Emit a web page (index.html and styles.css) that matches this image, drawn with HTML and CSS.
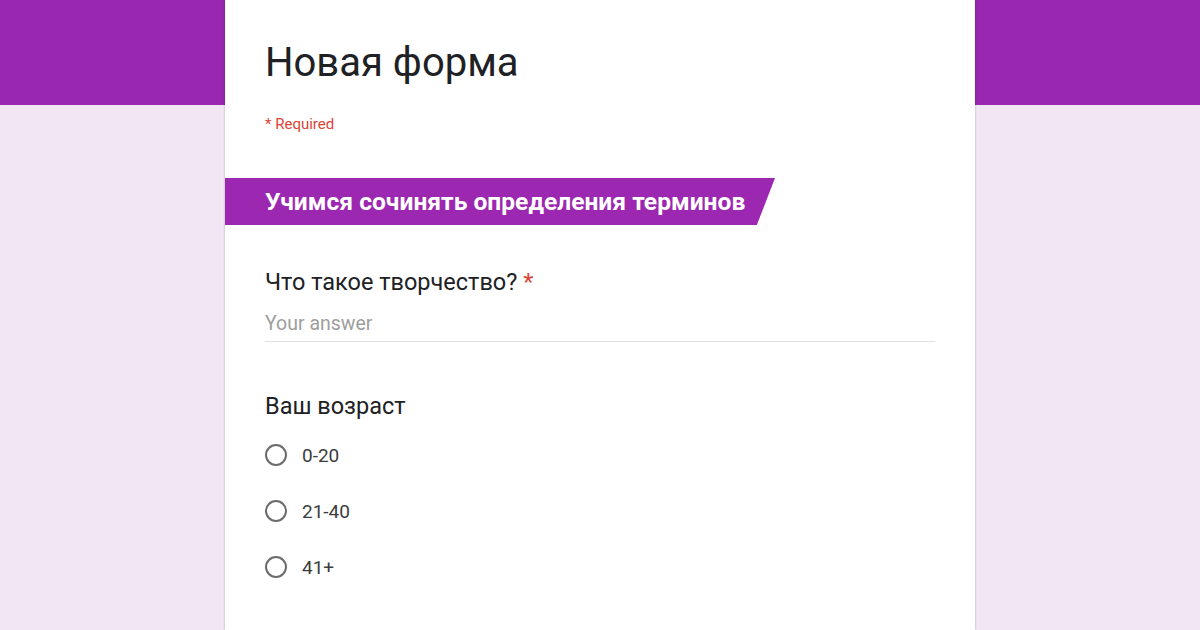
FILE: index.html
```html
<!DOCTYPE html>
<html lang="ru">
<head>
<meta charset="UTF-8">
<meta name="viewport" content="width=device-width, initial-scale=1.0">
<title>Новая форма</title>
<link rel="stylesheet" href="styles.css">
</head>
<body>
<div class="header-band"></div>
<div class="card">
  <div class="form-head">
    <h1>Новая форма</h1>
    <div class="required-note"><span class="star">*</span> Required</div>
  </div>

  <div class="section-title">Учимся сочинять определения терминов</div>

  <div class="question">
    <div class="q-title">Что такое творчество? <span class="star">*</span></div>
    <div class="answer">Your answer</div>
  </div>

  <div class="question">
    <div class="q-title">Ваш возраст</div>
    <div class="options">
      <label class="option"><span class="radio"></span>0-20</label>
      <label class="option"><span class="radio"></span>21-40</label>
      <label class="option"><span class="radio"></span>41+</label>
    </div>
  </div>
</div>
</body>
</html>
```

FILE: styles.css
```css
body {
  font-family: Roboto, "Liberation Sans", sans-serif;
  background-color: #f2e6f5;
  margin: 0;
  height: 630px;
  overflow: hidden;
  color: #202124;
}
.header-band {
  height: 105px;
  background-color: #9a27b0;
}
.card {
  width: 750px;
  margin: -105px auto 0;
  height: 630px;
  background: #fff;
  box-shadow: 0 0 2px rgba(0, 0, 0, 0.3);
}
.form-head {
  padding: 40px 40px 0;
}
h1 {
  margin: 0;
  font-size: 40px;
  font-weight: 400;
  line-height: 46px;
  color: #202124;
}
.required-note {
  margin-top: 29px;
  font-size: 15px;
  line-height: 18px;
  color: #db4437;
}
.star {
  color: #db4437;
}
.section-title {
  margin-top: 45px;
  width: 550px;
  height: 47px;
  box-sizing: border-box;
  padding-left: 40px;
  background-color: #9c27b0;
  clip-path: polygon(0 0, 100% 0, 96.7% 100%, 0 100%);
  color: #fff;
  font-size: 24.6px;
  font-weight: 700;
  line-height: 47px;
}
.question {
  padding: 0 40px;
}
.q-title {
  margin-top: 42px;
  font-size: 23.5px;
  line-height: 30px;
}
.question + .question .q-title {
  margin-top: 49px;
}
.answer {
  margin-top: 15px;
  padding-bottom: 5px;
  border-bottom: 1px solid #e0e0e0;
  font-size: 19.5px;
  line-height: 24px;
  color: #9e9e9e;
}
.options {
  margin-top: 22px;
}
.option {
  display: flex;
  align-items: center;
  height: 24px;
  margin-bottom: 32px;
  font-size: 19px;
  color: #3c3c3c;
}
.radio {
  width: 18px;
  height: 18px;
  border: 2px solid #6b6b6b;
  border-radius: 50%;
  margin-right: 15px;
}
```
